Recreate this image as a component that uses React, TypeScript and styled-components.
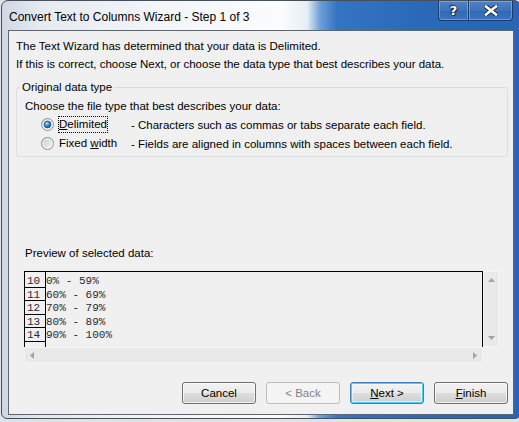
import React from 'react'
import styled, { createGlobalStyle, css } from 'styled-components'

// Page defaults.
const GlobalStyle = createGlobalStyle`
    html, body {
        margin: 0;
        padding: 0;
        overflow: hidden;
        background: #dfe3e8;
    }
    body {
        font-family: "Liberation Sans", Arial, sans-serif;
        color: #000;
    }
`

const BODY_FONT = '11.5px'

// Aero glass frame of the dialog.
const Window = styled.div`
    box-sizing: border-box;
    width: 520px;
    height: 419px;
    margin-left: 1px;
    display: flex;
    flex-direction: column;
    border: 1px solid #44505e;
    border-radius: 7px 7px 6px 6px;
    background: linear-gradient(
        90deg,
        #cfd7e2 0px,
        #e6ebf1 40px,
        #f3f5f8 160px,
        #fbfcfd 280px,
        #e6eef6 305px,
        #6f9fd6 318px,
        #3574c3 335px,
        #2b68b8 420px,
        #2a64b3 100%
    );
`

const TitleBar = styled.div`
    height: 29px;
    display: flex;
    align-items: flex-start;
    flex-shrink: 0;
`

const Title = styled.div`
    padding: 8px 0 0 7px;
    font-size: 12px;
    line-height: 16px;
    color: #000;
`

const CaptionButtons = styled.div`
    margin-left: auto;
    margin-right: 7px;
    display: flex;
`

const CaptionButton = styled.div<{ $w: number; $first?: boolean }>`
    box-sizing: border-box;
    width: ${(p) => p.$w}px;
    height: 20px;
    display: flex;
    align-items: center;
    justify-content: center;
    border: 1px solid #1b3b69;
    border-top: none;
    background: linear-gradient(
        #4f82c4 0%,
        #3d73bb 50%,
        #3068b4 51%,
        #3a74c0 100%
    );
    box-shadow: inset 0 0 0 1px rgba(255, 255, 255, 0.28);
    ${(p) =>
        p.$first
            ? css`
                  border-radius: 0 0 0 4px;
                  border-right: none;
              `
            : css`
                  border-radius: 0 0 4px 0;
              `}
`

const HelpGlyph = styled.span`
    font-family: "DejaVu Sans", sans-serif;
    font-weight: bold;
    font-size: 13px;
    line-height: 13px;
    color: #fff;
    text-shadow: 0 0 1px #1c2b40, 0 0 1px #1c2b40, 1px 1px 1px #1c2b40,
        -1px -1px 1px #1c2b40;
`

// Client area.
const Client = styled.div`
    flex: 1;
    box-sizing: border-box;
    margin: 0 6px 3px 6px;
    padding: 6px 5px 10px 7px;
    display: flex;
    flex-direction: column;
    background: #f0f0f0;
    border: 1px solid #5a6779;
    font-size: ${BODY_FONT};
`

const Line = styled.p`
    margin: 0;
    line-height: 18px;
    white-space: nowrap;
`

const Group = styled.fieldset`
    margin: 6px 0 0 0;
    padding: 0 0 3px 0;
    min-width: 0;
    border: 1px solid #d5dfe5;
    border-radius: 3px;
`

const Legend = styled.legend`
    margin-left: 3px;
    padding: 0 2px;
    line-height: 16px;
`

const Choose = styled.div`
    margin-top: 3px;
    padding-left: 8px;
    line-height: 17px;
    white-space: nowrap;
`

const RadioRow = styled.div`
    height: 19px;
    padding-left: 24px;
    display: flex;
    align-items: center;
    white-space: nowrap;
`

const LabelCell = styled.div`
    margin-left: 4px;
    width: 73px;
    flex-shrink: 0;
`

const FocusText = styled.span<{ $focus?: boolean }>`
    display: inline-block;
    line-height: 15px;
    border: 1px ${(p) => (p.$focus ? 'dotted #000' : 'solid transparent')};
`

const Key = styled.span`
    text-decoration: underline;
    text-underline-offset: 1px;
`

const PreviewLabel = styled.div`
    margin: 87px 0 0 9px;
    line-height: 18px;
`

const PreviewGrid = styled.div`
    margin: 9px 0 0 8px;
    display: grid;
    grid-template-columns: 459px 16px;
    grid-template-rows: 76px 16px;
`

const PreviewBox = styled.div`
    box-sizing: border-box;
    border: 1px solid #000;
    border-bottom: none;
    overflow: hidden;
    display: flex;
    font-family: "Liberation Mono", "Courier New", monospace;
    font-size: 11px;
    color: #2a2a2a;
`

const NumCol = styled.div`
    box-sizing: border-box;
    width: 21px;
    flex-shrink: 0;
    padding-top: 2px;
    border-right: 1px solid #000;
`

const NumCell = styled.div`
    height: 13.5px;
    box-sizing: border-box;
    padding: 2px 0 0 2px;
    line-height: 11px;
    border-bottom: 1px solid #000;
`

const DataCol = styled.div`
    padding-top: 2px;
`

const DataLine = styled.div`
    height: 13.5px;
    box-sizing: border-box;
    padding-top: 2px;
    line-height: 11px;
    white-space: pre;
`

const ScrollBar = styled.div<{ $vertical?: boolean }>`
    box-sizing: border-box;
    background: #e9e9e9;
    border: 1px solid #f5f5f5;
    display: flex;
    flex-direction: ${(p) => (p.$vertical ? 'column' : 'row')};
    align-items: center;
    justify-content: space-between;
    padding: ${(p) => (p.$vertical ? '6px 0' : '0 5px')};
`

const ButtonRow = styled.div`
    margin-top: auto;
    display: flex;
    justify-content: flex-end;
    gap: 10px;
`

const Button = styled.div<{ $disabled?: boolean; $default?: boolean }>`
    box-sizing: border-box;
    width: 74px;
    height: 22px;
    display: flex;
    align-items: center;
    justify-content: center;
    border-radius: 3px;
    border: 1px solid #707070;
    background: linear-gradient(#f2f2f2 0%, #ebebeb 50%, #dddddd 51%, #cfcfcf 100%);
    box-shadow: inset 0 0 0 1px rgba(255, 255, 255, 0.7);
    color: #000;
    ${(p) =>
        p.$disabled &&
        css`
            border-color: #b9bdc0;
            background: #f4f4f4;
            box-shadow: none;
            color: #838383;
        `}
    ${(p) =>
        p.$default &&
        css`
            border-color: #3c7fb1;
            box-shadow: inset 0 0 0 1px #48d1f8, inset 0 0 0 2px rgba(255, 255, 255, 0.5);
        `}
`

const Radio = ({ checked }: { checked?: boolean }) => (
    <svg width="13" height="13" viewBox="0 0 13 13" style={{ flexShrink: 0 }}>
        <defs>
            <linearGradient id="rfill" x1="0" y1="0" x2="1" y2="1">
                <stop offset="0" stopColor="#cbcbcb" />
                <stop offset="1" stopColor="#f7f7f7" />
            </linearGradient>
            <radialGradient id="rdot" cx="0.4" cy="0.35" r="0.7">
                <stop offset="0" stopColor="#b7e5fc" />
                <stop offset="0.45" stopColor="#3a92d8" />
                <stop offset="1" stopColor="#0d4a8c" />
            </radialGradient>
        </defs>
        <circle cx="6.5" cy="6.5" r="6" fill="url(#rfill)" stroke="#8f8f8f" strokeWidth="1" />
        <circle cx="6.5" cy="6.5" r="4.6" fill="none" stroke="#fafafa" strokeWidth="0.8" />
        {checked && <circle cx="6.5" cy="6.5" r="3.4" fill="url(#rdot)" stroke="#1b4f85" strokeWidth="0.7" />}
    </svg>
)

const Arrow = ({ dir }: { dir: 'up' | 'down' | 'left' | 'right' }) => {
    const pts = {
        up: '0,4 7,4 3.5,0',
        down: '0,0 7,0 3.5,4',
        left: '4,0 4,7 0,3.5',
        right: '0,0 0,7 4,3.5',
    }[dir]
    const vertical = dir == 'up' || dir == 'down'
    return (
        <svg width={vertical ? 7 : 4} height={vertical ? 4 : 7}>
            <polygon points={pts} fill="#a3a3a3" />
        </svg>
    )
}

const CloseGlyph = () => (
    <svg width="14" height="11" viewBox="0 0 14 11">
        <path d="M2 1.5 L12 9.5 M12 1.5 L2 9.5" stroke="#1c2b40" strokeWidth="4.6" strokeLinecap="square" />
        <path d="M2 1.5 L12 9.5 M12 1.5 L2 9.5" stroke="#ffffff" strokeWidth="2.6" strokeLinecap="square" />
    </svg>
)

const rows = [
    ['10', '0% - 59%'],
    ['11', '60% - 69%'],
    ['12', '70% - 79%'],
    ['13', '80% - 89%'],
    ['14', '90% - 100%'],
    ['', ''],
]

export default function App(): JSX.Element {
    return (
        <>
            <GlobalStyle />
            <Window>
                <TitleBar>
                    <Title>Convert Text to Columns Wizard - Step 1 of 3</Title>
                    <CaptionButtons>
                        <CaptionButton $w={30} $first>
                            <HelpGlyph>?</HelpGlyph>
                        </CaptionButton>
                        <CaptionButton $w={45}>
                            <CloseGlyph />
                        </CaptionButton>
                    </CaptionButtons>
                </TitleBar>
                <Client>
                    <Line>The Text Wizard has determined that your data is Delimited.</Line>
                    <Line>
                        If this is correct, choose Next, or choose the data type that best describes your data.
                    </Line>
                    <Group>
                        <Legend>Original data type</Legend>
                        <Choose>Choose the file type that best describes your data:</Choose>
                        <RadioRow>
                            <Radio checked />
                            <LabelCell>
                                <FocusText $focus>
                                    <Key>D</Key>elimited
                                </FocusText>
                            </LabelCell>
                            <span>- Characters such as commas or tabs separate each field.</span>
                        </RadioRow>
                        <RadioRow>
                            <Radio />
                            <LabelCell>
                                <FocusText>
                                    Fixed <Key>w</Key>idth
                                </FocusText>
                            </LabelCell>
                            <span>- Fields are aligned in columns with spaces between each field.</span>
                        </RadioRow>
                    </Group>
                    <PreviewLabel>Preview of selected data:</PreviewLabel>
                    <PreviewGrid>
                        <PreviewBox>
                            <NumCol>
                                {rows.map(([n], i) => (
                                    <NumCell key={i}>{n}</NumCell>
                                ))}
                            </NumCol>
                            <DataCol>
                                {rows.map(([, d], i) => (
                                    <DataLine key={i}>{d}</DataLine>
                                ))}
                            </DataCol>
                        </PreviewBox>
                        <ScrollBar $vertical>
                            <Arrow dir="up" />
                            <Arrow dir="down" />
                        </ScrollBar>
                        <ScrollBar>
                            <Arrow dir="left" />
                            <Arrow dir="right" />
                        </ScrollBar>
                    </PreviewGrid>
                    <ButtonRow>
                        <Button>Cancel</Button>
                        <Button $disabled>&lt; Back</Button>
                        <Button $default>
                            <span>
                                <Key>N</Key>ext &gt;
                            </span>
                        </Button>
                        <Button>
                            <span>
                                <Key>F</Key>inish
                            </span>
                        </Button>
                    </ButtonRow>
                </Client>
            </Window>
        </>
    )
}
